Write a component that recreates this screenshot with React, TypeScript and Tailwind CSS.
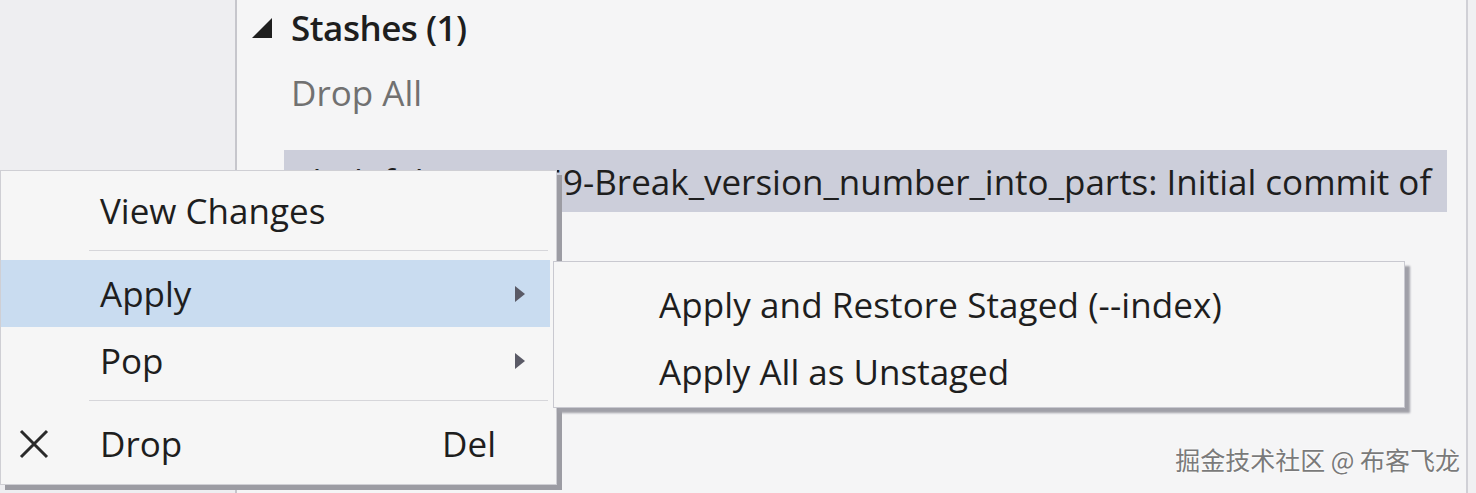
import React from "react";

const font = { fontFamily: '"Open Sans", "Noto Sans", sans-serif' };

function Sep() {
  return (
    <div className="h-[16px] pl-[88px] pr-[8px] pt-[6px]">
      <div className="h-px bg-[#d6d6da]" />
    </div>
  );
}

function Arrow() {
  return (
    <svg width="12" height="18" viewBox="0 0 12 18" className="ml-auto mr-[24px]">
      <path d="M1 1 L11 9 L1 17 Z" fill="#5a5a66" />
    </svg>
  );
}

export default function App() {
  return (
    <div
      className="relative w-[1476px] h-[493px] overflow-hidden bg-[#f0f0f2] text-[#1e1e1e]"
      style={font}
    >
      <div className="flex h-full">
        <div className="w-[237px] bg-[#eeeef1] border-r-2 border-[#c6c6cc]" />
        <div className="w-[1231px] bg-[#f5f5f6] border-r-2 border-[#d0d0d6] pl-[15px]">
          <div className="flex items-center h-[56px]">
            <svg width="20" height="20" viewBox="0 0 20 20">
              <path d="M0 20 L20 0 L20 20 Z" fill="#1e1e1e" />
            </svg>
            <span className="ml-[19px] text-[35px] font-semibold leading-none tracking-[-0.5px] -mt-[2px]">
              Stashes (1)
            </span>
          </div>
          <div className="h-[72px] flex items-center pl-[39px] text-[35px] leading-none text-[#717171]">
            Drop All
          </div>
          <div className="ml-[32px] mt-[22px] w-[1163px] h-[62px] bg-[#ccceda] flex items-center overflow-hidden pl-[16px]">
            <span className="text-[35px] leading-none whitespace-nowrap">
              d1d1f4b5 On 159-Break_version_number_into_parts: Initial commit of
            </span>
          </div>
        </div>
      </div>

      {/* context menu */}
      <div className="absolute left-0 top-[170px] w-[557px] bg-[#f6f6f6] border border-[#cfcfd4] shadow-[5px_5px_0_#9c9ca3] pt-[6px] pb-[7px] text-[35px] leading-none">
        <div className="h-[67px] flex items-center pl-[99px]">View Changes</div>
        <Sep />
        <div className="h-[67px] flex items-center pl-[99px] bg-[#c9dcf0] mr-[6px]">
          Apply
          <Arrow />
        </div>
        <div className="h-[67px] flex items-center pl-[99px] mr-[6px]">
          Pop
          <Arrow />
        </div>
        <Sep />
        <div className="h-[67px] flex items-center relative">
          <svg width="32" height="32" viewBox="0 0 32 32" className="ml-[17px]">
            <path d="M3 3 L29 29 M29 3 L3 29" stroke="#2a2a2a" strokeWidth="3" />
          </svg>
          <span className="ml-[50px]">Drop</span>
          <span className="ml-auto mr-[60px]">Del</span>
        </div>
      </div>

      {/* submenu */}
      <div className="absolute left-[553px] top-[261px] w-[852px] h-[147px] bg-[#f6f6f6] border border-[#c9c9d0] shadow-[5px_5px_2px_#a0a0a8] pt-[9px] text-[35px] leading-none">
        <div className="h-[67px] flex items-center pl-[105px] tracking-[0.1px]">Apply and Restore Staged (--index)</div>
        <div className="h-[67px] flex items-center pl-[105px]">Apply All as Unstaged</div>
      </div>

      {/* watermark */}
      <div
        className="absolute right-[16px] bottom-[21px] text-[25px] leading-none text-[#7a7a7a] [text-shadow:0_0_2px_#fff,0_0_2px_#fff]"
        style={{ fontFamily: '"Noto Sans CJK SC", "Open Sans", sans-serif' }}
      >
        掘金技术社区 @ 布客飞龙
      </div>
    </div>
  );
}
